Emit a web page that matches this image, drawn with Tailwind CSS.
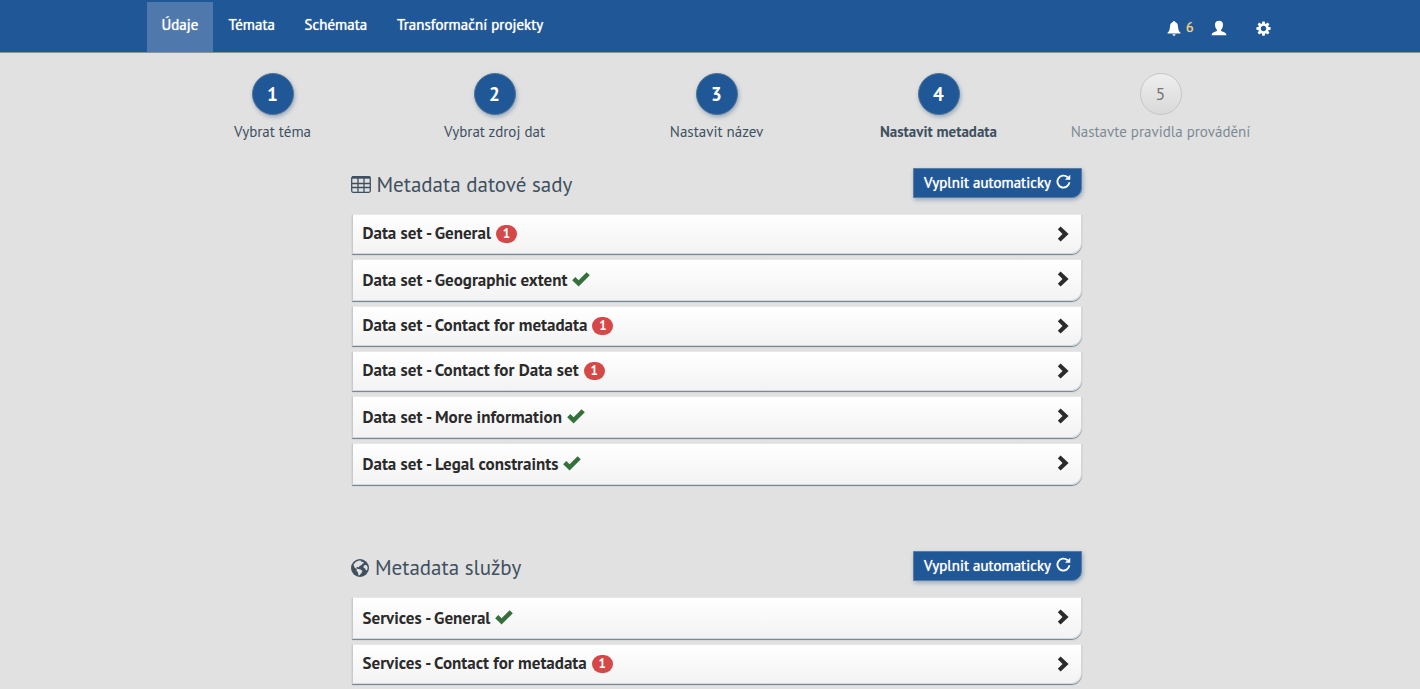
<!DOCTYPE html>
<html lang="cs">
<head>
<meta charset="utf-8">
<title>Nastavit metadata</title>
<script src="https://cdn.jsdelivr.net/npm/@tailwindcss/browser@4"></script>
</head>
<body class="h-[689px] overflow-hidden bg-[#e1e1e1] font-['PT_Sans','Lato',sans-serif] text-[15px] text-[#3e5060]">
<svg class="hidden">
  <symbol id="chevron" viewBox="0 0 12 16"><path d="M.8 3.300 3.600.5 11.600 8 3.600 15.500.8 12.700 5.500 8z"/></symbol>
  <symbol id="check" viewBox="0 0 18 15"><path d="M.2 8.300 3.300 5.100 6.600 8.300 14.600.3 17.800 3.300 6.600 14.600z"/></symbol>
  <symbol id="reload" viewBox="0 0 16 16"><path d="M14.300 8.800A6.400 6.400 0 1 1 12.400 3.500" fill="none" stroke="currentColor" stroke-width="2"/><path d="M15.200.7V6.200H9.500z"/></symbol>
</svg>
<header class="flex h-[53px] border-b border-[#8d9299] bg-[#1f5797] pl-[147px] pr-[149px] text-white">
  <nav class="flex leading-[50px] text-shadow-[0_0_1px_#fff]">
    <a class="mt-[2px] h-[50px] w-[66px] bg-[#4f79ac] pl-[14.500px] leading-[46px]">Údaje</a>
    <a class="w-[76.500px] pl-[15.500px]">Témata</a>
    <a class="w-[92px] pl-[15px]">Schémata</a>
    <a class="pl-[15.500px]">Transformační projekty</a>
  </nav>
  <div class="ml-auto flex items-start pt-[20px]">
    <svg class="mt-[1px] h-[15px] w-[14px] fill-white" viewBox="0 0 14 15"><path d="M7 0c.7 0 1 .5 1.100 1.100C10 1.700 10.800 3.300 11 5.500c.2 2.500.5 4.500 2.500 6.300v.7H.5v-.7C2.500 10 2.800 8 3 5.500c.2-2.200 1-3.800 2.900-4.400C6 .5 6.300 0 7 0zM5.500 13.300h3C8.300 15.300 5.700 15.300 5.500 13.300z"/></svg>
    <span class="ml-[5px] w-[8px] text-[14px] leading-[15px] text-[#f0cf78] text-shadow-[0_0_1px_#f0cf78]">6</span>
    <svg class="ml-[17px] h-[16px] w-[16px] fill-white" viewBox="0 0 16 16"><path d="M8 .8c2.600 0 4 1.500 4 4 0 2.200-.8 4-1.900 5v1.300c2.700.8 5.200 1.700 5.400 4.100H.5c.2-2.400 2.700-3.300 5.400-4.100V9.800C4.800 8.800 4 7 4 4.800c0-2.500 1.400-4 4-4z"/></svg>
    <svg class="ml-[29px] mt-[1px] h-[15px] w-[15px]" viewBox="-8 -8 16 16"><circle r="4.200" fill="none" stroke="#fff" stroke-width="2.600"/><g fill="#fff"><path id="t" d="M-1.300-7.600h2.600l.5 3h-3.600zM-1.300 7.600h2.600l.5-3h-3.600z"/><use href="#t" transform="rotate(45)"/><use href="#t" transform="rotate(90)"/><use href="#t" transform="rotate(135)"/></g></svg>
  </div>
</header>

<ol class="grid grid-cols-[repeat(5,222px)] pl-[161.500px] pt-[20px] text-center">
  <li><div class="ml-[90.500px] size-[42px] rounded-full border border-[#537492] bg-[#1f5797] pr-[1px] text-[19px] font-bold leading-[40px] text-white shadow-[1px_2px_4px_#97a8bb]">1</div><p class="mt-[6px] leading-[22px]">Vybrat téma</p></li>
  <li><div class="ml-[90.500px] size-[42px] rounded-full border border-[#537492] bg-[#1f5797] pr-[1px] text-[19px] font-bold leading-[40px] text-white shadow-[1px_2px_4px_#97a8bb]">2</div><p class="mt-[6px] leading-[22px]">Vybrat zdroj dat</p></li>
  <li><div class="ml-[90.500px] size-[42px] rounded-full border border-[#537492] bg-[#1f5797] pr-[1px] text-[19px] font-bold leading-[40px] text-white shadow-[1px_2px_4px_#97a8bb]">3</div><p class="mt-[6px] leading-[22px]">Nastavit název</p></li>
  <li><div class="ml-[90.500px] size-[42px] rounded-full border border-[#537492] bg-[#1f5797] pr-[1px] text-[19px] font-bold leading-[40px] text-white shadow-[1px_2px_4px_#97a8bb]">4</div><p class="mt-[6px] font-bold leading-[22px]">Nastavit metadata</p></li>
  <li><div class="ml-[90.500px] size-[42px] rounded-full border border-[#c6c6c6] bg-linear-to-b from-[#eeeeee] to-[#d9d9d9] pr-[1px] text-[18px] leading-[40px] text-[#777]">5</div><p class="mt-[6px] leading-[22px] text-[#7d8a96]">Nastavte pravidla provádění</p></li>
</ol>

<main class="ml-[352px] w-[730px] pt-[25px] text-[#2b2b2b]">
  <section class="h-[383px]">
    <div class="flex h-[46px] items-start justify-between">
      <h2 class="-ml-[1px] flex h-[34px] items-center text-[21px] text-[#3e5060]"><svg class="-mt-[2px] mr-[5.500px] h-[17px] w-[20px]" viewBox="0 0 20 17" fill="none" stroke="currentColor" stroke-width="1.300"><rect x=".7" y=".7" width="18.600" height="15.600" rx="1.500"/><path d="M1 1.500h18" stroke-width="2.400"/><path d="M1 7.500h18M1 11.500h18M7 2v14M13 2v14"/></svg>Metadata datové sady</h2>
      <button class="flex h-[30px] w-[169px] items-center rounded-br-[10px] border border-[#5c7d9f] bg-[#1f5797] pl-[10px] text-white shadow-[1px_2px_4px_#97a8bb]"><span class="w-[132px] whitespace-nowrap text-left text-shadow-[0_0_1px_#fff]">Vyplnit automaticky</span><svg class="size-[15px] -mt-[3px] fill-white"><use href="#reload"/></svg></button>
    </div>
    <div class="flex flex-col gap-[5px] text-[17px] font-bold">
      <div class="flex h-[40px] items-center rounded-br-[11px] border border-[#d3d8db] border-l-[#c3cad0] border-t-[#e6e7e8] bg-linear-to-b from-white to-[#f3f3f3] pl-[9.500px] pr-[12px] shadow-[0_1px_1px_#6f7f8e]"><span>Data set - General</span><b class="ml-[5px] h-[18px] w-[21px] rounded-full bg-[#d64848] text-center text-[13px] leading-[18px] text-white">1</b><svg class="ml-auto -mt-[1px] h-[16px] w-[12px] fill-[#2b2b2b]"><use href="#chevron"/></svg></div>
      <div class="flex h-[42px] items-center rounded-br-[11px] border border-[#d3d8db] border-l-[#c3cad0] border-t-[#e6e7e8] bg-linear-to-b from-white to-[#f3f3f3] pl-[9.500px] pr-[12px] shadow-[0_1px_1px_#6f7f8e]"><span class="mt-[2px]">Data set - Geographic extent</span><svg class="ml-[5px] -mt-[1px] h-[15px] w-[18px] fill-[#34703a]"><use href="#check"/></svg><svg class="ml-auto -mt-[3px] h-[16px] w-[12px] fill-[#2b2b2b]"><use href="#chevron"/></svg></div>
      <div class="flex h-[40px] items-center rounded-br-[11px] border border-[#d3d8db] border-l-[#c3cad0] border-t-[#e6e7e8] bg-linear-to-b from-white to-[#f3f3f3] pl-[9.500px] pr-[12px] shadow-[0_1px_1px_#6f7f8e]"><span>Data set - Contact for metadata</span><b class="ml-[5px] h-[18px] w-[21px] rounded-full bg-[#d64848] text-center text-[13px] leading-[18px] text-white">1</b><svg class="ml-auto -mt-[1px] h-[16px] w-[12px] fill-[#2b2b2b]"><use href="#chevron"/></svg></div>
      <div class="flex h-[40px] items-center rounded-br-[11px] border border-[#d3d8db] border-l-[#c3cad0] border-t-[#e6e7e8] bg-linear-to-b from-white to-[#f3f3f3] pl-[9.500px] pr-[12px] shadow-[0_1px_1px_#6f7f8e]"><span>Data set - Contact for Data set</span><b class="ml-[5px] h-[18px] w-[21px] rounded-full bg-[#d64848] text-center text-[13px] leading-[18px] text-white">1</b><svg class="ml-auto -mt-[1px] h-[16px] w-[12px] fill-[#2b2b2b]"><use href="#chevron"/></svg></div>
      <div class="flex h-[42px] items-center rounded-br-[11px] border border-[#d3d8db] border-l-[#c3cad0] border-t-[#e6e7e8] bg-linear-to-b from-white to-[#f3f3f3] pl-[9.500px] pr-[12px] shadow-[0_1px_1px_#6f7f8e]"><span class="mt-[2px]">Data set - More information</span><svg class="ml-[5px] -mt-[1px] h-[15px] w-[18px] fill-[#34703a]"><use href="#check"/></svg><svg class="ml-auto -mt-[3px] h-[16px] w-[12px] fill-[#2b2b2b]"><use href="#chevron"/></svg></div>
      <div class="flex h-[42px] items-center rounded-br-[11px] border border-[#d3d8db] border-l-[#c3cad0] border-t-[#e6e7e8] bg-linear-to-b from-white to-[#f3f3f3] pl-[9.500px] pr-[12px] shadow-[0_1px_1px_#6f7f8e]"><span class="mt-[2px]">Data set - Legal constraints</span><svg class="ml-[5px] -mt-[1px] h-[15px] w-[18px] fill-[#34703a]"><use href="#check"/></svg><svg class="ml-auto -mt-[3px] h-[16px] w-[12px] fill-[#2b2b2b]"><use href="#chevron"/></svg></div>
    </div>
  </section>
  <section>
    <div class="flex h-[46px] items-start justify-between">
      <h2 class="-ml-[1px] flex h-[34px] items-center text-[21px] text-[#3e5060]"><svg class="mr-[6px] size-[18px]" viewBox="0 0 18 18"><circle cx="9" cy="9" r="9" fill="#3e5060"/><path fill="#e1e1e1" d="M2.500 5.500 5 2.700 8 1.500l2.500.3-.5 1.200 2-.2 1 1.400-1.500.3-.8 1.500L8.500 7l-.8 1.500L6 7.800l-.8 1.400 1.600.8 2.500.2 2.200 1.800-1 2-2 2.300-1 .2-.5-3-1.500-1.800.3-1.500L3.500 8.500z"/><path fill="#e1e1e1" d="m12.500 7.300 1.500-1.500 2 .7.700 2.300-.7 2.700-1.300-.5-.5-1.500-1.500-.5z"/></svg>Metadata služby</h2>
      <button class="flex h-[30px] w-[169px] items-center rounded-br-[10px] border border-[#5c7d9f] bg-[#1f5797] pl-[10px] text-white shadow-[1px_2px_4px_#97a8bb]"><span class="w-[132px] whitespace-nowrap text-left text-shadow-[0_0_1px_#fff]">Vyplnit automaticky</span><svg class="size-[15px] -mt-[3px] fill-white"><use href="#reload"/></svg></button>
    </div>
    <div class="flex flex-col gap-[5px] text-[17px] font-bold">
      <div class="flex h-[42px] items-center rounded-br-[11px] border border-[#d3d8db] border-l-[#c3cad0] border-t-[#e6e7e8] bg-linear-to-b from-white to-[#f3f3f3] pl-[9.500px] pr-[12px] shadow-[0_1px_1px_#6f7f8e]"><span class="mt-[2px]">Services - General</span><svg class="ml-[5px] -mt-[1px] h-[15px] w-[18px] fill-[#34703a]"><use href="#check"/></svg><svg class="ml-auto -mt-[3px] h-[16px] w-[12px] fill-[#2b2b2b]"><use href="#chevron"/></svg></div>
      <div class="flex h-[40px] items-center rounded-br-[11px] border border-[#d3d8db] border-l-[#c3cad0] border-t-[#e6e7e8] bg-linear-to-b from-white to-[#f3f3f3] pl-[9.500px] pr-[12px] shadow-[0_1px_1px_#6f7f8e]"><span>Services - Contact for metadata</span><b class="ml-[5px] h-[18px] w-[21px] rounded-full bg-[#d64848] text-center text-[13px] leading-[18px] text-white">1</b><svg class="ml-auto -mt-[1px] h-[16px] w-[12px] fill-[#2b2b2b]"><use href="#chevron"/></svg></div>
    </div>
  </section>
</main>
</body>
</html>
